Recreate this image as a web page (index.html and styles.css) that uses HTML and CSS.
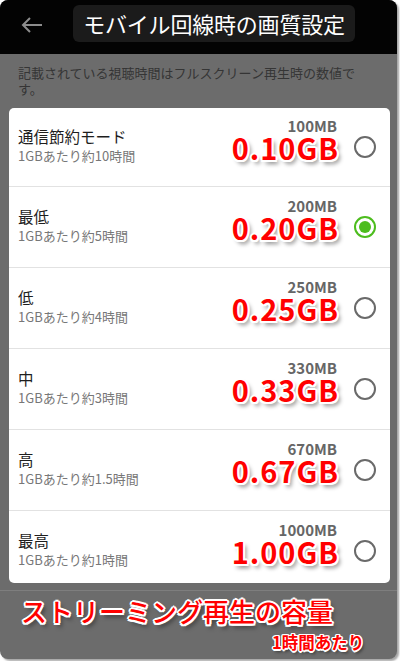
FILE: index.html
```html
<!DOCTYPE html>
<html lang="ja">
<head>
<meta charset="utf-8">
<link rel="stylesheet" href="styles.css">
</head>
<body>
<div class="frame">
  <header class="topbar">
    <svg class="back" width="22" height="16" viewBox="0 0 22 16"><path d="M21 8H2M9 1L2 8l7 7" fill="none" stroke="#8c8c8c" stroke-width="2"/></svg>
    <div class="title">モバイル回線時の画質設定</div>
  </header>
  <p class="note">記載されている視聴時間はフルスクリーン再生時の数値です。</p>
  <div class="card">
    <div class="row first">
      <div class="info"><div class="name">通信節約モード</div><div class="sub">1GBあたり約10時間</div></div>
      <div class="size"><div class="mb">100MB</div><div class="gb">0.10GB</div></div>
      <span class="radio"></span>
    </div>
    <div class="row">
      <div class="info"><div class="name">最低</div><div class="sub">1GBあたり約5時間</div></div>
      <div class="size"><div class="mb">200MB</div><div class="gb">0.20GB</div></div>
      <span class="radio on"></span>
    </div>
    <div class="row">
      <div class="info"><div class="name">低</div><div class="sub">1GBあたり約4時間</div></div>
      <div class="size"><div class="mb">250MB</div><div class="gb">0.25GB</div></div>
      <span class="radio"></span>
    </div>
    <div class="row">
      <div class="info"><div class="name">中</div><div class="sub">1GBあたり約3時間</div></div>
      <div class="size"><div class="mb">330MB</div><div class="gb">0.33GB</div></div>
      <span class="radio"></span>
    </div>
    <div class="row">
      <div class="info"><div class="name">高</div><div class="sub">1GBあたり約1.5時間</div></div>
      <div class="size"><div class="mb">670MB</div><div class="gb">0.67GB</div></div>
      <span class="radio"></span>
    </div>
    <div class="row">
      <div class="info"><div class="name">最高</div><div class="sub">1GBあたり約1時間</div></div>
      <div class="size"><div class="mb">1000MB</div><div class="gb">1.00GB</div></div>
      <span class="radio"></span>
    </div>
  </div>
  <div class="divider"></div>
  <div class="caption">ストリーミング再生の容量</div>
  <div class="per">1時間あたり</div>
</div>
</body>
</html>
```
FILE: styles.css
```css
* { box-sizing: border-box; }
html, body { margin: 0; padding: 0; background: #fff; }
body { font-family: "Noto Sans CJK JP", "Noto Sans", sans-serif; width: 400px; height: 661px; overflow: hidden; }
.frame {
  width: 397px; height: 659px;
  background: #6c6c6c;
  border-radius: 8px;
  overflow: hidden;
  box-shadow: 2px 2px 2px rgba(0,0,0,0.35);
}
.topbar {
  height: 54px; background: #030303;
  display: flex; align-items: flex-start;
}
.back { margin: 17px 0 0 21px; }
.title {
  margin: 5px 0 0 30px;
  width: 282px; height: 37px;
  background: #1b1b1b; border-radius: 6px;
  color: #fff; font-size: 22px; line-height: 37px;
  text-align: center; letter-spacing: -0.2px;
}
.note {
  margin: 0; padding: 11px 30px 0 18px;
  font-size: 13px; line-height: 16px; color: #353535;
  height: 54px;
}
.card {
  margin-left: 9px; width: 381px; height: 475px;
  background: #fff; border-radius: 5px; overflow: hidden;
}
.row {
  height: 81px; display: flex; align-items: center;
  padding: 0 14px 0 9px;
  border-top: 1px solid #e2e2e2;
}
.row.first { height: 78px; border-top: none; }
.info { flex: 1; margin-bottom: 3px; }
.name { font-size: 15.5px; line-height: 20px; color: #1e1e1e; }
.sub { font-size: 13px; line-height: 20px; color: #777; }
.size { text-align: right; margin-right: 16px; margin-bottom: 18px; }
.mb { font-size: 15px; font-weight: 700; color: #666; line-height: 15px; margin-right: 1px; margin-bottom: 2px; }
.gb {
  font-size: 29px; font-weight: 700; color: #ff0000; line-height: 24px;
  letter-spacing: 1px; margin-right: -1px;
  text-shadow:
    2px 0 0 #fff, -2px 0 0 #fff, 0 2px 0 #fff, 0 -2px 0 #fff,
    1.5px 1.5px 0 #fff, -1.5px 1.5px 0 #fff, 1.5px -1.5px 0 #fff, -1.5px -1.5px 0 #fff,
    3px 4px 4px rgba(0,0,0,0.45);
}
.radio {
  width: 22px; height: 22px; border-radius: 50%;
  border: 2px solid #6a6a6a; flex: none; position: relative;
}
.radio.on { border-color: #4dbd1e; }
.radio.on::after {
  content: ""; position: absolute; left: 3px; top: 3px;
  width: 12px; height: 12px; border-radius: 50%; background: #4dbd1e;
}
.divider { height: 1px; background: #7e7e7e; margin-top: 7px; }
.caption {
  margin-top: 4px; padding-left: 21px;
  font-size: 26px; line-height: 32px; font-weight: 500; color: #ff0000;
  text-shadow:
    2px 0 0 #fff, -2px 0 0 #fff, 0 2px 0 #fff, 0 -2px 0 #fff,
    1.5px 1.5px 0 #fff, -1.5px 1.5px 0 #fff, 1.5px -1.5px 0 #fff, -1.5px -1.5px 0 #fff,
    3px 4px 4px rgba(0,0,0,0.5);
}
.per {
  margin-top: 3px; padding-left: 272px;
  font-size: 16.5px; line-height: 24px; font-weight: 700; color: #ff0000;
  text-shadow:
    1.5px 0 0 #fff, -1.5px 0 0 #fff, 0 1.5px 0 #fff, 0 -1.5px 0 #fff,
    1px 1px 0 #fff, -1px 1px 0 #fff, 1px -1px 0 #fff, -1px -1px 0 #fff,
    2px 3px 3px rgba(0,0,0,0.5);
}
```
